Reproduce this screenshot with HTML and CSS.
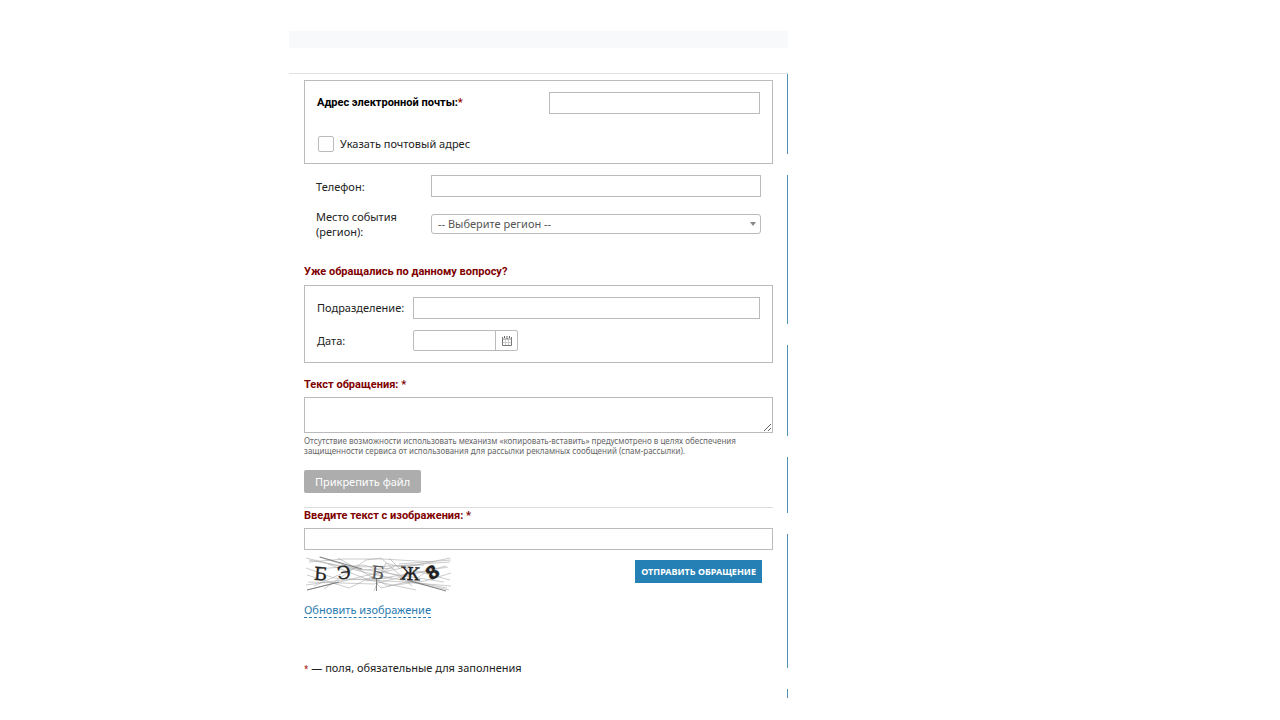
FILE: index.html
```html
<!DOCTYPE html>
<html lang="ru">
<head>
    <meta charset="UTF-8">
    <meta name="viewport" content="width=device-width, initial-scale=1.0">
    <title>Отправить обращение</title>
    <link rel="stylesheet" href="styles.css">
</head>
<body>
    <div class="page">
        <div class="strip"></div>
        <div class="content">
            <form class="form">
                <div class="box">
                    <div class="row">
                        <label class="email-label" for="email">Адрес электронной почты:<span class="required">*</span></label>
                        <input class="field email-field" type="email" id="email">
                    </div>
                    <div class="check-row">
                        <input type="checkbox" id="postal">
                        <label for="postal">Указать почтовый адрес</label>
                    </div>
                </div>

                <div class="contacts">
                    <div class="row">
                        <label class="contact-label" for="phone">Телефон:</label>
                        <input class="field" type="tel" id="phone">
                    </div>
                    <div class="row">
                        <label class="contact-label" for="region">Место события (регион):</label>
                        <div class="select-wrap">
                            <select id="region">
                                <option>-- Выберите регион --</option>
                            </select>
                        </div>
                    </div>
                </div>

                <h2>Уже обращались по данному вопросу?</h2>
                <div class="box previous">
                    <div class="row">
                        <label class="previous-label" for="department">Подразделение:</label>
                        <input class="field" type="text" id="department">
                    </div>
                    <div class="row">
                        <label class="previous-label" for="date">Дата:</label>
                        <div class="date">
                            <input type="text" id="date">
                            <button type="button" aria-label="Выбрать дату">
                                <svg width="10" height="10" viewBox="0 0 10 10">
                                    <path d="M.5 1v8.500h9V1" fill="none" stroke="#777"/>
                                    <path d="M0 3h10" stroke="#888"/>
                                    <path d="M2.500 0v2M5 0v3M7.500 0v2" stroke="#666"/>
                                    <path d="M3.500 4v5M6.500 4v5M1 6.500h8" stroke="#ccc"/>
                                </svg>
                            </button>
                        </div>
                    </div>
                </div>

                <h2><label for="message">Текст обращения: *</label></h2>
                <textarea id="message"></textarea>
                <p class="note">Отсутствие возможности использовать механизм «копировать-вставить» предусмотрено в целях обеспечения защищенности сервиса от использования для рассылки рекламных сообщений (спам-рассылки).</p>
                <button class="attach" type="button">Прикрепить файл</button>

                <div class="captcha">
                    <h2><label for="captcha">Введите текст с изображения: *</label></h2>
                    <input class="field" type="text" id="captcha">
                    <div class="captcha-row">
                        <svg class="captcha-image" width="149" height="36" viewBox="0 0 149 36">
                            <g fill="none" stroke="#aaa" stroke-width=".6">
                                <path d="M2 2L68 18L145 34M15 1L50 12L140 26M3 34L60 20L146 2M5 6L40 3H78L130 6"/>
                                <path d="M2 12L30 22L100 26L147 30M10 30L52 11L120 9M4 26L70 28L142 10"/>
                                <path d="M20 33L62 4L77 2L108 30M70 35L82 7L146 24"/>
                                <path d="M34 2L84 30L121 25L147 17M3 19L45 32L90 10L146 6M24 8L65 24L112 34"/>
                                <path d="M14 13L60 9L116 27L143 32M72 27L77 32L111 24L125 13M85 2L96 13"/>
                                <path d="M2 29L38 24L88 22M62 25L144 11M5 4L58 14L90 12M95 8L147 4"/>
                            </g>
                            <path d="M16 1L58 13M3 34L35 26M103 24L142 35M72.500 23v12" fill="none" stroke="#666" stroke-width=".8"/>
                            <g class="captcha-text">
                                <text x="10" y="24" transform="rotate(4 15 18)">Б</text>
                                <text x="33" y="23" transform="rotate(-8 39 17)">Э</text>
                                <text class="pale" x="67" y="23" transform="rotate(6 73 17)">Б</text>
                                <text x="96" y="24" transform="rotate(3 105 18)">Ж</text>
                                <text class="heavy" x="122" y="23" transform="rotate(-35 128 16)">8</text>
                            </g>
                        </svg>
                        <button class="submit" type="submit">ОТПРАВИТЬ ОБРАЩЕНИЕ</button>
                    </div>
                    <a class="refresh" href="#">Обновить изображение</a>
                </div>

                <p class="legend"><span class="required">*</span> — поля, обязательные для заполнения</p>
            </form>

            <!-- broken line along the right edge -->
            <div class="rail">
                <span class="part-1"></span>
                <span class="part-2"></span>
                <span class="part-3"></span>
                <span class="part-4"></span>
                <span class="part-5"></span>
                <span class="part-6"></span>
            </div>
        </div>
    </div>
</body>
</html>
```
FILE: styles.css
```css
* {
    box-sizing: border-box;
}
body {
    margin: 0;
    background: #fff;
    color: #222;
    font-family: "Noto Sans", "Open Sans", sans-serif;
    font-size: 11px;
    line-height: 16px;
}
input, select, textarea, button {
    margin: 0;
    font: inherit;
    color: inherit;
}
.page {
    max-width: 702px;
    margin: 0 auto;
    padding: 31px 0 22px;
    display: grid;
    grid-template-columns: minmax(0, 499px) 1fr;
}
.strip {
    grid-column: 1;
    height: 17px;
    background: #f7f9fb;
}
.content {
    grid-column: 1;
    display: flex;
    margin-top: 25px;
    border-top: 1px solid #e0e3e5;
}
.form {
    flex: 1;
    min-width: 0;
    padding: 6px 14px 0 15px;
}
.rail {
    display: flex;
    flex-direction: column;
    gap: 21px;
    width: 1px;
}
.rail span {
    background: #4f93b2;
}
.part-1 { flex: 80; }
.part-2 { flex: 150; }
.part-3 { flex: 91; }
.part-4 { flex: 56; }
.part-5 { flex: 135; }
.part-6 { flex: 9; }

.box {
    padding: 11px 12px;
    border: 1px solid #bbb;
}
.row {
    display: flex;
    align-items: center;
}
.field {
    display: block;
    flex: 1;
    width: 100%;
    min-width: 0;
    height: 22px;
    padding: 0 6px;
    border: 1px solid #bbb;
    background: #fff;
}
.required {
    color: #900;
}
.email-label {
    flex: 1;
    color: #000;
    font-family: Roboto, sans-serif;
    font-weight: bold;
}
.email-field {
    flex: 0 1 211px;
}
.check-row {
    display: flex;
    align-items: center;
    gap: 6px;
    margin-top: 22px;
    padding-left: 1px;
}
.check-row input {
    appearance: none;
    width: 16px;
    height: 16px;
    border: 1px solid #bbb;
    border-radius: 2px;
}
.contacts {
    display: grid;
    gap: 12px;
    padding: 11px 12px 25px;
}
.contact-label {
    width: 115px;
    padding-right: 20px;
    line-height: 15px;
}
.select-wrap {
    position: relative;
    flex: 1;
}
.select-wrap::after {
    content: "";
    position: absolute;
    top: 8px;
    right: 5px;
    border: 3px solid transparent;
    border-top: 4px solid #888;
    border-bottom: 0;
    pointer-events: none;
}
.select-wrap select {
    display: block;
    appearance: none;
    width: 100%;
    height: 20px;
    padding: 0 20px 0 6px;
    border: 1px solid #bbb;
    border-radius: 3px;
    background: #fff;
    color: #555;
}
h2 {
    margin: 0;
    color: #800000;
    font-family: Roboto, sans-serif;
    font-size: 11px;
    line-height: 16px;
}
.previous {
    display: grid;
    gap: 11px;
    margin: 5px 0 14px;
}
.previous-label {
    width: 96px;
}
.date {
    display: flex;
    width: 105px;
    height: 21px;
    border: 1px solid #bbb;
    border-radius: 2px;
}
.date input {
    flex: 1;
    min-width: 0;
    padding: 0 5px;
    border: 0;
    background: none;
}
.date button {
    display: flex;
    align-items: center;
    justify-content: center;
    width: 22px;
    padding: 0;
    border: 0;
    border-left: 1px solid #bbb;
    background: none;
}
textarea {
    display: block;
    width: 100%;
    height: 36px;
    margin-top: 4px;
    padding: 4px 6px;
    border: 1px solid #bbb;
}
.note {
    margin: 3px 0 14px;
    padding-right: 24px;
    color: #666;
    font-size: 8px;
    line-height: 10px;
}
.attach {
    display: block;
    height: 23px;
    padding: 0 11px;
    border: 0;
    border-radius: 2px;
    background: #adadad;
    color: #fff;
}
.captcha {
    margin-top: 14px;
    border-top: 1px solid #ddd;
}
.captcha .field {
    margin-top: 4px;
}
.captcha-row {
    display: flex;
    justify-content: space-between;
    align-items: flex-start;
    margin-top: 6px;
    padding-right: 11px;
}
.captcha-text {
    fill: #222;
    stroke: #222;
    stroke-width: .3px;
    font-family: "DejaVu Serif", serif;
    font-size: 18px;
}
.captcha-text .pale {
    fill: #555;
    stroke: none;
}
.captcha-text .heavy {
    font-family: "DejaVu Sans", sans-serif;
    font-weight: bold;
}
.submit {
    height: 23px;
    margin-top: 4px;
    padding: 0 6px;
    border: 0;
    background: #2580b5;
    color: #fff;
    font-size: 9px;
    font-weight: bold;
}
.refresh {
    display: inline-block;
    margin-top: 10px;
    border-bottom: 1px dashed #2a7ab0;
    color: #2a7ab0;
    line-height: 15px;
    text-decoration: none;
}
.legend {
    margin: 42px 0 21px;
}
.legend .required {
    font-size: 8px;
}
```
